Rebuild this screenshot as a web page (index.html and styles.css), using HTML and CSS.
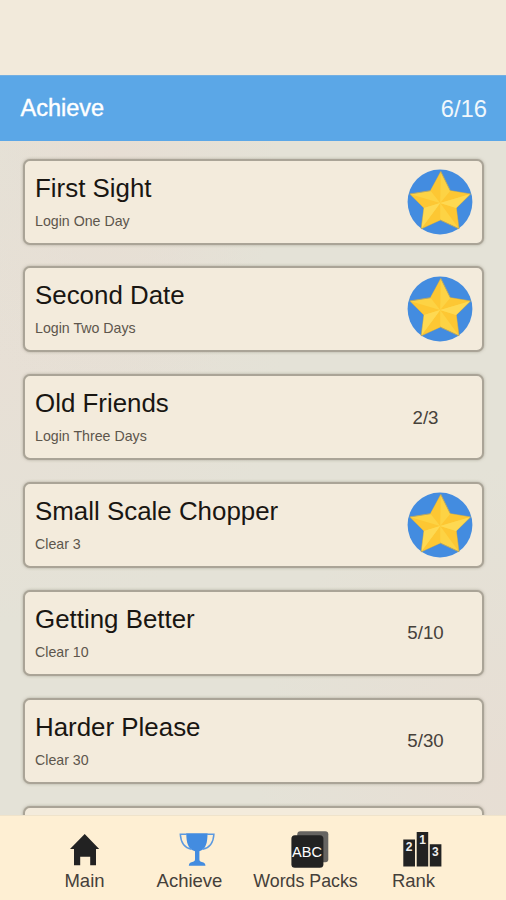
FILE: index.html
```html
<!DOCTYPE html>
<html lang="en">
<head>
    <meta charset="UTF-8">
    <meta name="viewport" content="width=device-width, initial-scale=1.0">
    <title>Achieve</title>
    <link rel="stylesheet" href="styles.css">
</head>
<body>
    <svg class="symbols" aria-hidden="true">
        <symbol id="star" viewBox="0 0 66 66">
            <circle cx="33" cy="33" r="32.4" fill="#438ce0"/>
            <path fill="#fdd344" stroke="#b9a863" stroke-width="1" d="M33.8 2.5 43.3 21.7 63.5 25 49.2 39 52 59.8 33.2 51 14.2 59.8 17 39 2.8 25 23.5 21.7Z"/>
            <path fill="#fdc733" d="M33.2 34 33.8 3 23.5 21.7ZM33.2 34 3.5 25.3 17 39ZM33.2 34 33.2 51 14.6 59.2ZM33.2 34 51.6 59.2 49.2 39ZM33.2 34 62.8 25.3 43.3 21.7Z"/>
            <path fill="#fed952" d="M33.2 34 49.2 39 62.8 25.3ZM33.2 34 17 39 14.6 59.2Z"/>
        </symbol>
    </svg>
    <div class="screen">
        <div class="top-space"></div>
        <div class="header">
            <h1>Achieve</h1>
            <span class="total">6/16</span>
        </div>
        <div class="list">
            <div class="card">
                <div class="info">
                    <h2>First Sight</h2>
                    <p>Login One Day</p>
                </div>
                <svg class="star"><use href="#star"/></svg>
            </div>
            <div class="card">
                <div class="info">
                    <h2>Second Date</h2>
                    <p>Login Two Days</p>
                </div>
                <svg class="star"><use href="#star"/></svg>
            </div>
            <div class="card">
                <div class="info">
                    <h2>Old Friends</h2>
                    <p>Login Three Days</p>
                </div>
                <span class="progress">2/3</span>
            </div>
            <div class="card">
                <div class="info">
                    <h2>Small Scale Chopper</h2>
                    <p>Clear 3</p>
                </div>
                <svg class="star"><use href="#star"/></svg>
            </div>
            <div class="card">
                <div class="info">
                    <h2>Getting Better</h2>
                    <p>Clear 10</p>
                </div>
                <span class="progress">5/10</span>
            </div>
            <div class="card">
                <div class="info">
                    <h2>Harder Please</h2>
                    <p>Clear 30</p>
                </div>
                <span class="progress">5/30</span>
            </div>
            <div class="card"></div>
        </div>
        <div class="nav">
            <div class="nav-item main">
                <svg width="40" height="40" viewBox="0 0 40 40">
                    <path fill="#222" d="M19.7 4 34.2 19H31V35.3H25.2V26.8H15.2V35.3H9V19H5Z"/>
                </svg>
                <span>Main</span>
            </div>
            <div class="nav-item achieve">
                <svg width="40" height="40" viewBox="0 0 40 40">
                    <path fill="#438ce0" d="M8.3 3.3H29.5C29.5 13 28 19.2 21.4 21.2V29.5C21.4 31.5 23 32 25.5 32.5Q27.5 33.3 27.5 35.7H10.8Q10.8 33.3 12.6 32.5C15 32 17 31.5 17 29.5V21.2C10 19.2 8.3 13 8.3 3.3Z"/>
                    <path fill="none" stroke="#5b99e0" stroke-width="1.5" d="M9 4.2H2.3C2.8 13 7.5 18 13.5 19.2M29 4.2H35.9C35.4 13 30.7 18 24.7 19.2"/>
                </svg>
                <span>Achieve</span>
            </div>
            <div class="nav-item packs">
                <svg width="40" height="40" viewBox="0 0 40 40">
                    <rect x="6.3" y="1.3" width="31" height="31" rx="3" fill="#666461"/>
                    <rect x="0.4" y="5.2" width="32" height="32.5" rx="3.5" fill="#222"/>
                    <text class="abc" x="16" y="27">ABC</text>
                </svg>
                <span>Words Packs</span>
            </div>
            <div class="nav-item rank">
                <svg width="40" height="40" viewBox="0 0 40 40">
                    <path fill="#222" d="M0.3 9.5H12V36.5H0.3ZM13.7 2H25.2V36.5H13.7ZM26.8 14.3H38.4V36.5H26.8Z"/>
                    <text class="place" x="6" y="21.3">2</text>
                    <text class="place" x="19.5" y="14.3">1</text>
                    <text class="place" x="32.3" y="26.3">3</text>
                </svg>
                <span>Rank</span>
            </div>
        </div>
    </div>
</body>
</html>
```

FILE: styles.css
```css
body {
    margin: 0;
    font-family: "Liberation Sans", Arial, sans-serif;
}

h1, h2, p {
    margin: 0;
    font-weight: normal;
}

.symbols {
    display: none;
}

.screen {
    display: flex;
    flex-direction: column;
    height: 900px;
    overflow: hidden;
    background: #e6e2d8;
}

.top-space {
    flex: none;
    height: 75px;
    background: #f2eadb;
}

.header {
    flex: none;
    display: flex;
    justify-content: space-between;
    align-items: center;
    box-sizing: border-box;
    height: 66px;
    padding: 0 19px 0 20.5px;
    background: #5ba7e7;
    color: #fff;
    border-top: 1px solid #74b0e2;
}

.header h1 {
    font-size: 23.5px;
    -webkit-text-stroke: 0.4px #fff;
}

.total {
    font-size: 23.8px;
    color: #f0f7fc;
}

.list {
    flex: 1;
    min-height: 0;
    overflow: hidden;
    padding: 17.5px 22px 0 23px;
    background:
        radial-gradient(ellipse at 22% 2%, rgba(232, 221, 211, 0.8), transparent 30%),
        radial-gradient(ellipse at 0% 35%, rgba(232, 223, 213, 0.8), transparent 40%),
        radial-gradient(ellipse at 100% 95%, rgba(232, 221, 211, 0.8), transparent 35%),
        #e4e2d7;
}

.card {
    display: flex;
    justify-content: space-between;
    box-sizing: border-box;
    height: 86px;
    margin-bottom: 21.85px;
    padding: 0 9px 0 10px;
    background: #f3ebdc;
    border: 2px solid #aaa497;
    border-radius: 7px;
    box-shadow: 0 0 3px rgba(120, 113, 98, 0.5);
}

.info h2 {
    margin-top: 12px;
    font-size: 25.9px;
    line-height: 30px;
    color: #191612;
}

.info p {
    margin-top: 10px;
    font-size: 14.2px;
    line-height: 16px;
    color: #5d564c;
}

.star {
    width: 66px;
    height: 66px;
    margin-top: 8px;
}

.progress {
    width: 95px;
    margin-top: 30.5px;
    font-size: 18.7px;
    line-height: 22px;
    text-align: center;
    color: #46413a;
}

.nav {
    flex: none;
    display: flex;
    box-sizing: border-box;
    height: 85px;
    padding: 14px 0 0 32px;
    background: #feefd3;
    border-top: 1px solid #efe3cb;
}

.nav-item {
    display: flex;
    flex-direction: column;
    align-items: center;
    width: 105px;
    font-size: 18.5px;
    line-height: 22px;
    color: #45403a;
    white-space: nowrap;
}

.achieve svg {
    margin-left: 16px;
}

.packs {
    width: 127px;
    font-size: 17.8px;
}

.packs svg {
    margin-left: 10px;
}

.rank {
    width: 89px;
}

.rank svg {
    margin-left: 18px;
}

.abc {
    font-size: 14.5px;
    text-anchor: middle;
    fill: #fff;
}

.place {
    font-size: 12px;
    font-weight: bold;
    text-anchor: middle;
    fill: #eee;
}
```
